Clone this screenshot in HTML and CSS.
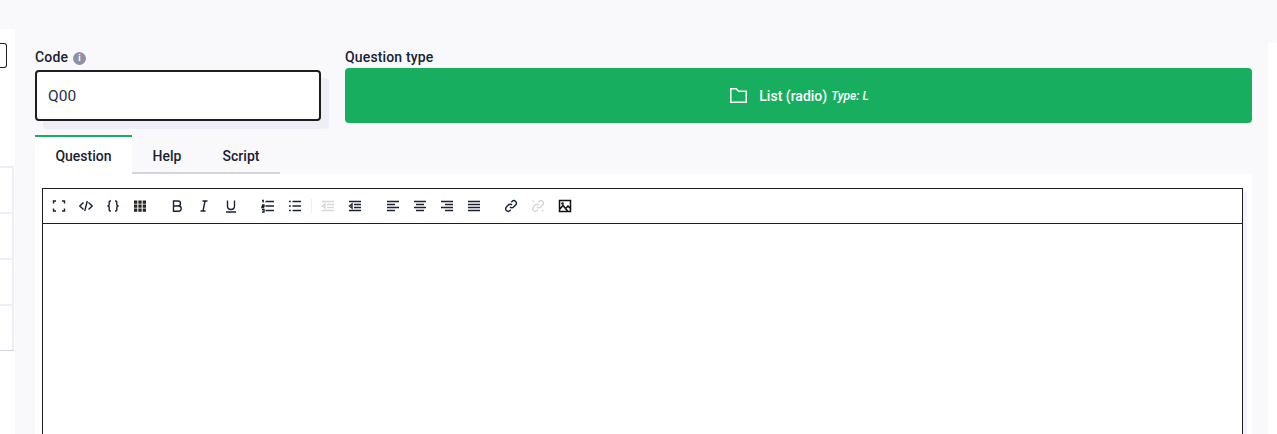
FILE: index.html
```html
<!DOCTYPE html>
<html lang="en">
<head>
<meta charset="utf-8">
<title>Question editor</title>
<link rel="stylesheet" href="styles.css">
</head>
<body>
<div class="page">
  <aside class="side">
    <div class="side-btn"></div>
    <ul class="side-list">
      <li></li><li></li><li></li><li></li>
    </ul>
  </aside>
  <main class="main">
    <div class="fields">
      <div class="field-code">
        <label class="label">Code <span class="info">i</span></label>
        <div class="input-wrap"><div class="input">Q00</div></div>
      </div>
      <div class="field-type">
        <label class="label">Question type</label>
        <button class="type-btn">
          <svg class="folder" width="17" height="15" viewBox="0 0 17 15"><path d="M.8.8h5.400l2.400 2.400h7.600v11H.8z" fill="none" stroke="#fff" stroke-width="1.500"/></svg>
          <span class="type-name">List (radio)</span> <em class="type-code">Type: L</em>
        </button>
      </div>
    </div>
    <div class="tabs">
      <div class="tab active">Question</div>
      <div class="tab help">Help</div>
      <div class="tab script">Script</div>
    </div>
    <div class="panel">
      <div class="editor">
        <div class="toolbar">
          <div class="group">
            <svg class="ic" viewBox="0 0 14 14"><path d="M1.500 4.500v-2.500h2.500M10 2h2.500v2.500M12.500 9.500v2.500H10M4 12H1.500V9.500"/></svg>
            <svg class="ic" viewBox="0 0 14 14"><path d="M4.500 3.500.8 7l3.700 3.500M9.500 3.500 13.200 7l-3.700 3.500M8.300 2 5.700 12"/></svg>
            <svg class="ic" viewBox="0 0 14 14"><path d="M5 2H4.200Q3.200 2 3.200 3v3L2 7l1.200 1v3q0 1 1 1H5M9 2h.8q1 0 1 1v3L12 7l-1.200 1v3q0 1-1 1H9"/></svg>
            <svg class="ic tbl" viewBox="0 0 14 14"><path d="M1 1.500h3.300v3.200H1zM5.350 1.500h3.300v3.200h-3.300zM9.700 1.500H13v3.200H9.700zM1 5.500h3.300v3.200H1zM5.350 5.500h3.300v3.200h-3.300zM9.700 5.500H13v3.200H9.700zM1 9.500h3.300v3.200H1zM5.350 9.500h3.300v3.200h-3.300zM9.700 9.500H13v3.200H9.700z"/></svg>
          </div>
          <div class="group">
            <svg class="ic" viewBox="0 0 14 14"><path d="M3.500 2H8q2.500 0 2.500 2.500T8 7H3.500zM3.500 7H8.500q2.700 0 2.700 2.600T8.500 12.200H3.500z"/></svg>
            <svg class="ic" viewBox="0 0 14 14"><path d="M5.500 2h5M3.500 12h5M8 2 6 12"/></svg>
            <svg class="ic" viewBox="0 0 14 14"><path d="M3.500 1.500V7q0 3.500 3.500 3.500T10.500 7V1.500M2 13h10"/></svg>
          </div>
          <div class="group sep">
            <svg class="ic" viewBox="0 0 14 14"><path d="M4.500 2.500h8.500M4.500 7h8.500M4.500 11.500h8.500M1 1.500h1.200v2M1 6h2v1.500H1V8.500h2M1 10.500h2v2.500H1"/></svg>
            <svg class="ic" viewBox="0 0 14 14"><path d="M4.500 2.500h8.500M4.500 7h8.500M4.500 11.500h8.500M1 2.500h1.800M1 7h1.800M1 11.500h1.800"/></svg>
          </div>
          <div class="group wide">
            <svg class="ic off" viewBox="0 0 14 14"><path d="M1 2.500h12M6 5.500h7M6 8.500h7M1 11.500h12M4 5 1.500 7 4 9z"/></svg>
            <svg class="ic" viewBox="0 0 14 14"><path d="M1 2.500h12M6 5.500h7M6 8.500h7M1 11.500h12M4 5 1.500 7 4 9z"/></svg>
          </div>
          <div class="group">
            <svg class="ic" viewBox="0 0 14 14"><path d="M1 2.500h12M1 5.500h8M1 8.500h12M1 11.500h8"/></svg>
            <svg class="ic" viewBox="0 0 14 14"><path d="M1 2.500h12M3 5.500h8M1 8.500h12M3 11.500h8"/></svg>
            <svg class="ic" viewBox="0 0 14 14"><path d="M1 2.500h12M5 5.500h8M1 8.500h12M5 11.500h8"/></svg>
            <svg class="ic" viewBox="0 0 14 14"><path d="M1 2.500h12M1 5.500h12M1 8.500h12M1 11.500h12"/></svg>
          </div>
          <div class="group">
            <svg class="ic" viewBox="0 0 14 14"><path d="M6 8a2.500 2.500 0 0 0 3.600 0l2-2A2.500 2.500 0 0 0 8 2.400l-.8.800M8 6a2.500 2.500 0 0 0-3.600 0l-2 2A2.500 2.500 0 0 0 6 11.600l.8-.8"/></svg>
            <svg class="ic off" viewBox="0 0 14 14"><path d="M6 8a2.500 2.500 0 0 0 3.600 0l2-2A2.500 2.500 0 0 0 8 2.400l-.8.800M8 6a2.500 2.500 0 0 0-3.600 0l-2 2A2.500 2.500 0 0 0 6 11.600l.8-.8M11 11l1.500 1.500M3 3 1.500 1.500"/></svg>
            <svg class="ic heavy" viewBox="0 0 14 14"><path d="M1.500 1.500h11v11h-11zM1.500 10.500 5 6.500l5 6M8 9l2-2 2.500 2.500"/><circle cx="4.500" cy="4.500" r=".6"/></svg>
          </div>
        </div>
        <div class="body"></div>
      </div>
    </div>
  </main>
  <aside class="right"></aside>
</div>
</body>
</html>
```
FILE: styles.css
```css
* { box-sizing: border-box; }
html, body { margin: 0; height: 100%; overflow: hidden; }
body { background: #f9f9fc; font-family: Roboto, "Noto Sans", sans-serif; color: #1a2233; }
.page { display: flex; height: 434px; padding-top: 29px; }
.side { width: 15px; flex: none; background: #fff; overflow: hidden; padding-top: 14px; }
.side-btn { width: 7px; height: 25px; border: 1px solid #1e1e1e; border-left: 0; border-radius: 0 3px 3px 0; }
.side-list { list-style: none; margin: 98px 0 0; padding: 0; width: 14px; border-bottom: 1px solid #d4d5dc; }
.side-list li { height: 46px; border-top: 2px solid #eeeef6; border-right: 2px solid #eeeef6; }
.main { width: 1238px; flex: none; margin-top: -29px; padding: 49px 1px 0 20px; }
.right { width: 9px; flex: none; margin: 14px 0 0 15px; background: #fff; }
.fields { display: flex; gap: 16px; }
.field-code { width: 294px; flex: none; }
.field-type { flex: 1; }
.label { display: flex; align-items: center; gap: 5px; height: 17px; font-size: 14px; font-weight: 500; line-height: 17px; letter-spacing: .15px; }
.info { width: 13px; height: 13px; margin-top: 2px; border-radius: 50%; background: #8f92a6; color: #fff; font-size: 9px; font-weight: 700; text-align: center; line-height: 13px; }
.input-wrap { margin-top: 4px; box-shadow: 8px 8px 0 #eeeef6; width: 286px; border-radius: 4px; }
.input { height: 51px; border: 2px solid #1e1e1e; border-radius: 4px; background: #fff; padding: 0 11px; font-size: 15.500px; line-height: 49px; color: #1e3050; }
.type-btn { display: flex; align-items: center; justify-content: center; width: 907px; height: 55px; margin-top: 2px; border: 0; border-radius: 4px; background: #17ae5f; color: #fff; font-family: inherit; font-size: 14px; padding: 0 0 0 2px; }
.folder { margin-right: 12px; }
.type-name { font-weight: 500; margin-right: 4px; }
.type-code { font-size: 12px; font-weight: 500; }
.tabs { display: flex; margin-top: 12px; height: 39px; }
.tab { height: 39px; font-size: 14px; font-weight: 500; text-align: center; line-height: 37px; border-bottom: 2px solid #d4d5dc; padding-top: 3px; }
.tab.active { width: 97px; background: #fff; border-top: 2px solid #17ae5f; border-bottom: 0; padding-top: 1px; }
.tab.help { width: 70px; }
.tab.script { width: 78px; }
.panel { background: #fff; padding: 14px 9px 0 7px; height: 260px; }
.editor { border: 1px solid #1e1e1e; border-bottom: 0; height: 246px; box-shadow: 4px 4px 0 #f4f4fb; }
.toolbar { display: flex; height: 35px; align-items: center; border-bottom: 1px solid #1e1e1e; padding-left: 9px; }
.group { display: flex; gap: 13px; margin-right: 23px; }
.group.sep { margin-right: 9px; padding-right: 9px; border-right: 1px solid #eee; }
.group.wide { margin-right: 24px; }
.ic { width: 14px; height: 14px; fill: none; stroke: #1a2233; stroke-width: 1.400; flex: none; }
.ic.tbl { fill: #2a2420; stroke: none; }
.ic.off { stroke: #d5d6da; }
.ic.heavy { stroke: #111; stroke-width: 1.500; }
.body { height: 210px; background: #fff; }
```
